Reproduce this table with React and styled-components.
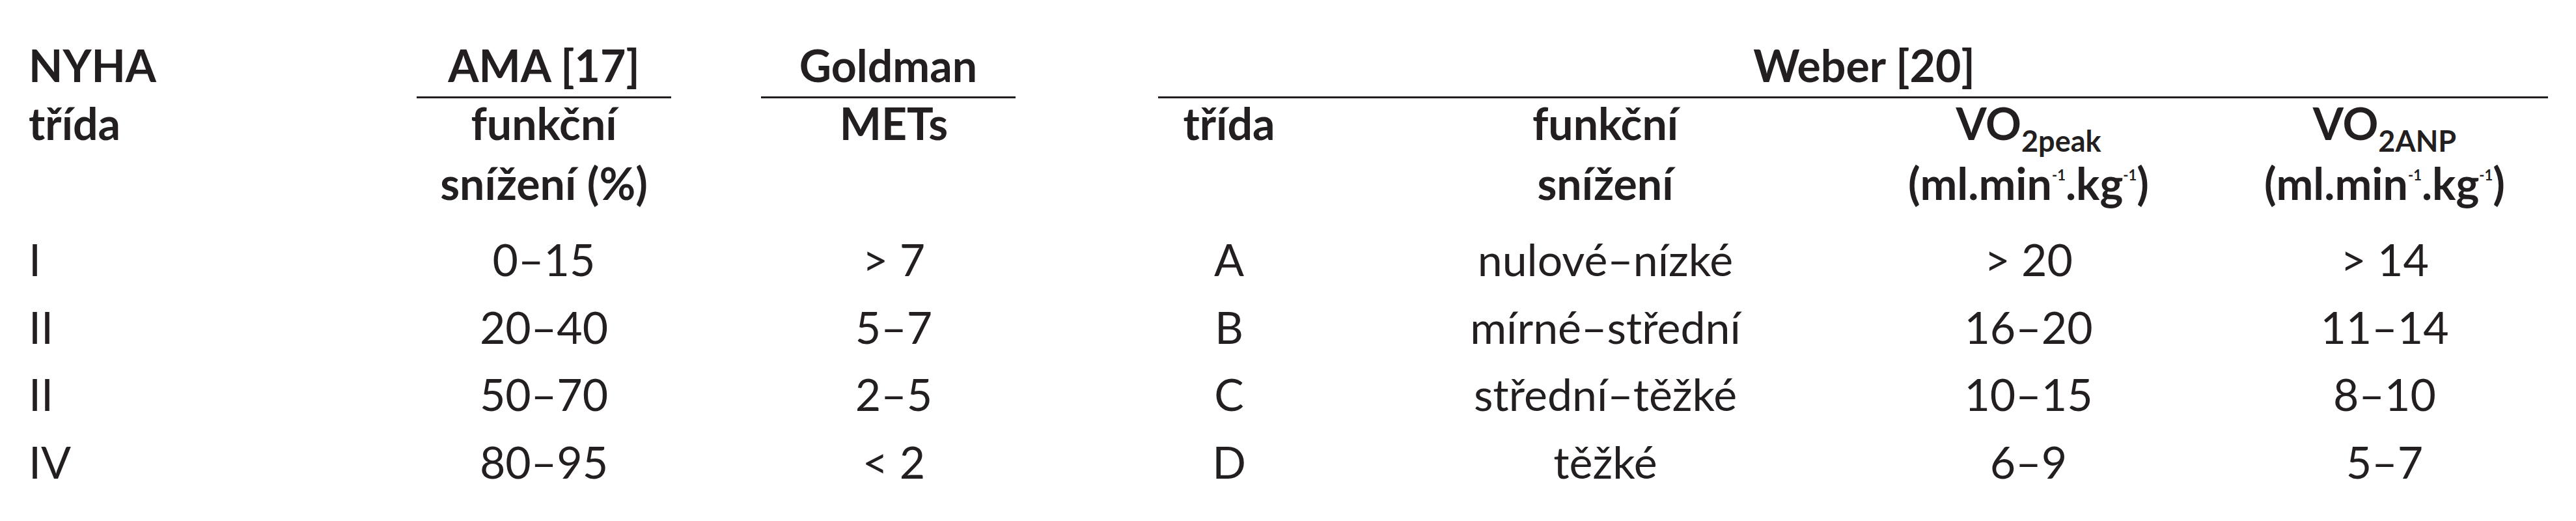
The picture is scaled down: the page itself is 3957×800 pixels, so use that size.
import React from "react";
import styled, { createGlobalStyle } from "styled-components";

const GlobalStyle = createGlobalStyle`
  html, body {
    margin: 0;
    padding: 0;
    background: #ffffff;
  }
  body {
    font-family: "Lato", "Open Sans", sans-serif;
    color: #231f20;
  }
`;

// columns: nyha | ama | gap | goldman | gap | weber třída | funkční | vo2peak | vo2anp
const Table = styled.div`
  display: grid;
  grid-template-columns: 596px 391px 138px 408px 123px 376px 780px 520px 574px;
  padding: 51px 0 0 44px;
  font-size: 68px;
`;

const GroupHead = styled.div`
  grid-row: 1;
  grid-column: ${(p) => p.$col};
  margin: 0 ${(p) => p.$right || 0}px 0 ${(p) => p.$left || 0}px;
  padding-left: ${(p) => p.$shift || 0}px;
  font-weight: 700;
  line-height: 97px;
  text-align: ${(p) => (p.$plain ? "left" : "center")};
  white-space: nowrap;
  border-bottom: ${(p) => (p.$plain ? "none" : "3px solid #231f20")};
`;

const SubHead = styled.div`
  grid-row: 2;
  grid-column: ${(p) => p.$col};
  margin: -8px 0 19px;
  font-weight: 700;
  line-height: 92px;
  text-align: ${(p) => p.$align || "center"};
  white-space: nowrap;
`;

const Line = styled.div``;

const Cell = styled.div`
  grid-column: ${(p) => p.$col};
  font-weight: 400;
  line-height: 103.7px;
  text-align: ${(p) => p.$align || "center"};
  white-space: nowrap;
`;

const Sub = styled.span`
  font-size: 45px;
  line-height: 0;
  vertical-align: -18px;
`;

const Sup = styled.span`
  font-size: 22px;
  line-height: 0;
  vertical-align: 30px;
`;

const rows = [
  ["I", "0–15", "> 7", "A", "nulové–nízké", "> 20", "> 14"],
  ["II", "20–40", "5–7", "B", "mírné–střední", "16–20", "11–14"],
  ["II", "50–70", "2–5", "C", "střední–těžké", "10–15", "8–10"],
  ["IV", "80–95", "< 2", "D", "těžké", "6–9", "5–7"],
];

const cols = [1, 2, 4, 6, 7, 8, 9];

function Units() {
  return (
    <Line>
      (ml.min<Sup>-1</Sup>.kg<Sup>-1</Sup>)
    </Line>
  );
}

export default function App() {
  return (
    <>
      <GlobalStyle />
      <Table>
        <GroupHead $col={1} $plain>
          NYHA
        </GroupHead>
        <GroupHead $col={2}>AMA [17]</GroupHead>
        <GroupHead $col={4} $right={17}>
          Goldman
        </GroupHead>
        <GroupHead $col="6 / 10" $left={79} $right={36} $shift={34}>
          Weber [20]
        </GroupHead>

        <SubHead $col={1} $align="left">
          třída
        </SubHead>
        <SubHead $col={2}>
          <Line>funkční</Line>
          <Line>snížení (%)</Line>
        </SubHead>
        <SubHead $col={4}>METs</SubHead>
        <SubHead $col={6}>třída</SubHead>
        <SubHead $col={7}>
          <Line>funkční</Line>
          <Line>snížení</Line>
        </SubHead>
        <SubHead $col={8}>
          <Line>
            VO<Sub>2peak</Sub>
          </Line>
          <Units />
        </SubHead>
        <SubHead $col={9}>
          <Line>
            VO<Sub>2ANP</Sub>
          </Line>
          <Units />
        </SubHead>

        {rows.map((row, r) =>
          row.map((value, i) => (
            <Cell key={`${r}-${i}`} $col={cols[i]} $align={i === 0 ? "left" : "center"}>
              {value}
            </Cell>
          ))
        )}
      </Table>
    </>
  );
}
